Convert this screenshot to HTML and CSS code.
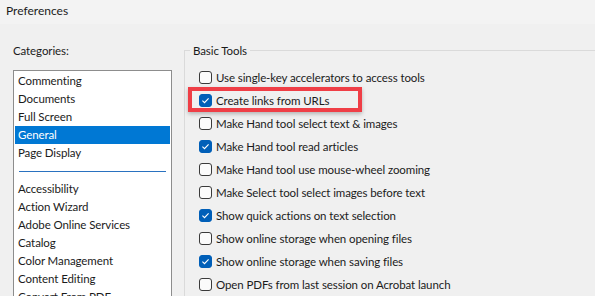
FILE: index.html
```html
<!DOCTYPE html>
<html>
<head>
<meta charset="utf-8">
<link rel="stylesheet" href="styles.css">
</head>
<body>
<div class="titlebar">Preferences</div>
<div class="main">
  <div class="left">
    <div class="label">Categories:</div>
    <ul class="list">
      <li class="item">Commenting</li>
      <li class="item">Documents</li>
      <li class="item">Full Screen</li>
      <li class="item selected">General</li>
      <li class="item">Page Display</li>
      <li class="sep"></li>
      <li class="item">Accessibility</li>
      <li class="item">Action Wizard</li>
      <li class="item">Adobe Online Services</li>
      <li class="item">Catalog</li>
      <li class="item">Color Management</li>
      <li class="item">Content Editing</li>
      <li class="item">Convert From PDF</li>
    </ul>
  </div>
  <div class="group">
    <div class="legend">Basic Tools</div>
    <div class="rows">
      <div class="row"><span class="cb"></span><span>Use single-key accelerators to access tools</span></div>
      <div class="row"><span class="cb on"><svg viewBox="0 0 13 13" width="13" height="13"><path d="M3.4 6.7 L5.5 8.7 L9.6 4.3" fill="none" stroke="#fff" stroke-width="1.1"/></svg></span><span>Create links from URLs</span><span class="redbox"></span></div>
      <div class="row"><span class="cb"></span><span>Make Hand tool select text &amp; images</span></div>
      <div class="row"><span class="cb on"><svg viewBox="0 0 13 13" width="13" height="13"><path d="M3.4 6.7 L5.5 8.7 L9.6 4.3" fill="none" stroke="#fff" stroke-width="1.1"/></svg></span><span>Make Hand tool read articles</span></div>
      <div class="row"><span class="cb"></span><span>Make Hand tool use mouse-wheel zooming</span></div>
      <div class="row"><span class="cb"></span><span>Make Select tool select images before text</span></div>
      <div class="row"><span class="cb on"><svg viewBox="0 0 13 13" width="13" height="13"><path d="M3.4 6.7 L5.5 8.7 L9.6 4.3" fill="none" stroke="#fff" stroke-width="1.1"/></svg></span><span>Show quick actions on text selection</span></div>
      <div class="row"><span class="cb"></span><span>Show online storage when opening files</span></div>
      <div class="row"><span class="cb on"><svg viewBox="0 0 13 13" width="13" height="13"><path d="M3.4 6.7 L5.5 8.7 L9.6 4.3" fill="none" stroke="#fff" stroke-width="1.1"/></svg></span><span>Show online storage when saving files</span></div>
      <div class="row"><span class="cb"></span><span>Open PDFs from last session on Acrobat launch</span></div>
    </div>
  </div>
</div>
</body>
</html>
```
FILE: styles.css
```css
html, body {
  margin: 0;
  padding: 0;
}
body {
  width: 595px;
  height: 296px;
  overflow: hidden;
  background: #f0f0f0;
  font-family: Lato, "Noto Sans", sans-serif;
  font-size: 11.5px;
  letter-spacing: -0.1px;
  color: #1b1b1b;
}
.titlebar {
  height: 24px;
  line-height: 22px;
  padding-left: 6px;
  background: #f3f3f3;
  font-size: 12px;
  letter-spacing: 0;
}
.main {
  display: flex;
  align-items: flex-start;
}
.left {
  margin-left: 13px;
  width: 159px;
  padding-top: 18px;
  flex: none;
}
.label {
  line-height: 18px;
  margin-bottom: 10px;
}
.list {
  list-style: none;
  margin: 0;
  padding: 1px;
  background: #fff;
  border: 1px solid #8d8d8d;
  height: 260px;
}
.item {
  height: 18px;
  line-height: 18px;
  padding-left: 3px;
  white-space: nowrap;
}
.item.selected {
  background: #0078d4;
  color: #fff;
}
.sep {
  height: 18px;
  display: flex;
  align-items: center;
  padding: 0 4px;
}
.sep::before {
  content: "";
  flex: 1;
  height: 1px;
  margin-top: 1px;
  background: #2a72c0;
}
.group {
  margin-left: 12px;
  margin-top: 26px;
  width: 600px;
  height: 300px;
  border-top: 1px solid #dadada;
  border-left: 1px solid #dadada;
  flex: none;
}
.legend {
  display: block;
  width: max-content;
  margin-top: -9px;
  margin-left: 5px;
  padding: 0 3px;
  line-height: 18px;
  background: #f0f0f0;
}
.rows {
  margin-top: 6px;
}
.row {
  position: relative;
  display: flex;
  align-items: center;
  height: 23px;
  padding-left: 14px;
  gap: 4px;
  white-space: nowrap;
}
.cb {
  width: 13px;
  height: 13px;
  box-sizing: border-box;
  border: 1px solid #3a3a3a;
  border-radius: 3px;
  background: #fbfbfb;
  flex: none;
  display: flex;
}
.cb.on {
  background: #005fb8;
  border-color: #005fb8;
}
.cb svg {
  margin: -1px;
}
.redbox {
  position: absolute;
  left: 3px;
  top: -2px;
  width: 174px;
  height: 25px;
  box-sizing: border-box;
  border: 4px solid #ef3e46;
  box-shadow: 0 2px 4px rgba(0, 0, 0, 0.25);
}
```
